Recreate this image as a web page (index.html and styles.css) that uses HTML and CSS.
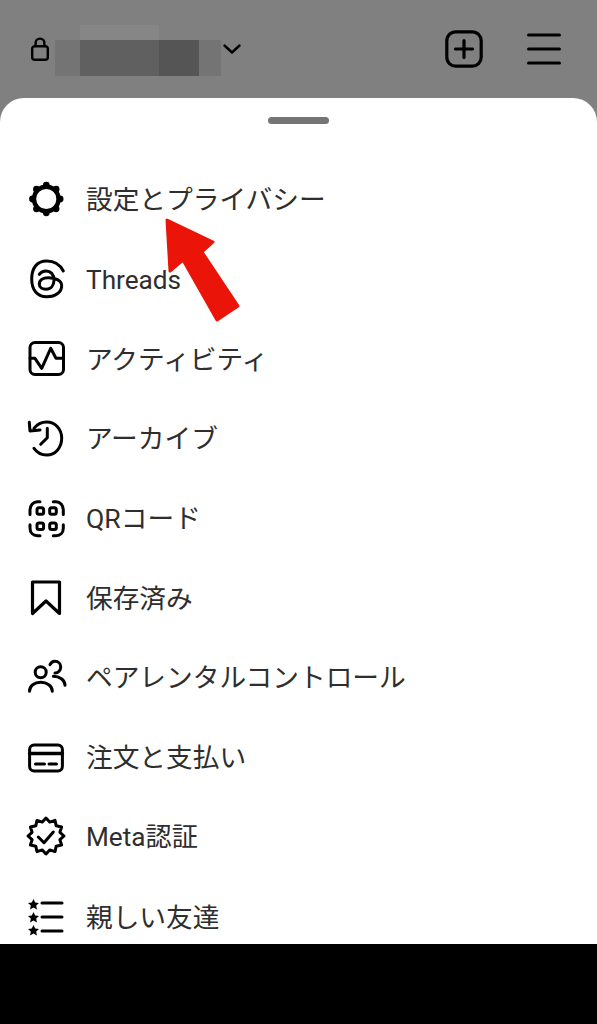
FILE: index.html
```html
<!DOCTYPE html>
<html lang="ja">
<head>
  <meta charset="UTF-8">
  <meta name="viewport" content="width=device-width, initial-scale=1.0">
  <title>メニュー</title>
  <link rel="stylesheet" href="styles.css">
</head>
<body>
  <div class="screen">
    <header class="topbar">
      <div class="account">
        <svg class="lock" viewBox="0 0 18 24" fill="none" stroke="#000" stroke-width="2.4">
          <rect x="1.2" y="9.2" width="15.6" height="13.6" rx="2.6"/>
          <path d="M4.6 9V6a4.400 4.400 0 0 1 8.800 0v3"/>
        </svg>
        <div class="mosaic">
          <span class="m1"></span><span class="m2"></span><span class="m3"></span><span class="m4"></span>
        </div>
        <svg class="chevron" viewBox="0 0 18 10" fill="none" stroke="#000" stroke-width="2.4" stroke-linecap="round" stroke-linejoin="round">
          <path d="M1.500 1.500 9 8.500l7.500-7"/>
        </svg>
      </div>
      <div class="actions">
        <svg class="plus" viewBox="0 0 38 38" fill="none" stroke="#000" stroke-width="3.2" stroke-linecap="round">
          <rect x="1.800" y="1.800" width="34.400" height="34.400" rx="9"/>
          <path d="M19 10.500v17M10.500 19h17"/>
        </svg>
        <svg class="burger" viewBox="0 0 34 32" fill="none" stroke="#000" stroke-width="3.2" stroke-linecap="round">
          <path d="M1.600 2h30.800M1.600 16h30.800M1.600 30h30.800"/>
        </svg>
      </div>
    </header>

    <main class="sheet">
      <div class="handle"></div>
      <ul class="menu">
        <li class="item">
          <svg class="ico" viewBox="0 0 36 36" fill="none" stroke="#000" stroke-width="4.400">
            <circle cx="18.300" cy="17" r="12.300"/>
            <g fill="#000" stroke="none">
              <circle cx="18.300" cy="3.200" r="3.400"/><circle cx="18.300" cy="30.800" r="3.400"/>
              <circle cx="4.500" cy="17" r="3.400"/><circle cx="32.100" cy="17" r="3.400"/>
              <circle cx="8.500" cy="7.200" r="3.400"/><circle cx="28.100" cy="7.200" r="3.400"/>
              <circle cx="8.500" cy="26.800" r="3.400"/><circle cx="28.100" cy="26.800" r="3.400"/>
            </g>
          </svg>
          <span class="label">設定とプライバシー</span>
        </li>
        <li class="item">
          <svg class="ico" viewBox="0 0 36 36" fill="none" stroke="#000" stroke-width="3" stroke-linecap="round">
            <path d="M35.300 9C31.300 1.300 25.300-1 18.700-1 8.700-1 3.700 6.300 3.700 17c0 11 5.600 17.700 15 17.700 9.300 0 15-5 15-11 0-5.700-6.700-8-13.400-8-5.600 0-9 2.600-9 6.600 0 3.400 3.400 5 6.700 5 4.700 0 8-3.600 8-9.300 0-5.700-3.300-9-8-9-2.700 0-5.300 1.300-6.700 3.300"/>
          </svg>
          <span class="label threads">Threads</span>
        </li>
        <li class="item">
          <svg class="ico" viewBox="0 0 36 36" fill="none" stroke="#000" stroke-width="3" stroke-linejoin="round" stroke-linecap="round">
            <rect x="2" y="1.500" width="33.500" height="32" rx="5"/>
            <path d="M2 17.300h5l6.700 10 9-20 5.300 10h7.300"/>
          </svg>
          <span class="label">アクティビティ</span>
        </li>
        <li class="item">
          <svg class="ico" viewBox="0 0 36 36" fill="none" stroke="#000" stroke-width="3" stroke-linecap="round" stroke-linejoin="round">
            <path d="M6 7.300C9 3.300 13.500 1 18.700 1 27.300 1 33.700 8 33.700 17.300S27.300 34 18.700 34c-5.200 0-9.700-2.500-12.700-6.700"/>
            <path d="M1.300 1.300 2 10l10-1"/>
            <path d="M19.300 7.300v9.400l-6.600 6.600"/>
          </svg>
          <span class="label">アーカイブ</span>
        </li>
        <li class="item">
          <svg class="ico" viewBox="0 0 36 36" fill="none" stroke="#000" stroke-width="3" stroke-linecap="round">
            <path d="M12 .8H9.500C5 .8 2 4.500 2 9v4.500M25.300 .8h2.700c4.500 0 7.300 3.700 7.300 8.200v4.500M2 23.700V27c0 4.500 3 7.700 7.500 7.700H12M35.300 23.700V27c0 4.500-2.800 7.700-7.300 7.700h-2.700"/>
            <rect x="9" y="6.700" width="6.600" height="6.600" rx="2"/>
            <rect x="21.700" y="6.700" width="6.600" height="6.600" rx="2"/>
            <rect x="9" y="21.900" width="6.600" height="6.600" rx="2"/>
            <rect x="21.700" y="21.900" width="6.600" height="6.600" rx="2"/>
          </svg>
          <span class="label">QRコード</span>
        </li>
        <li class="item">
          <svg class="ico" viewBox="0 0 36 36" fill="none" stroke="#000" stroke-width="3.200" stroke-linejoin="round">
            <path d="M4.500 2h27v31.500L18 21 4.500 33.500z"/>
          </svg>
          <span class="label">保存済み</span>
        </li>
        <li class="item">
          <svg class="ico" viewBox="0 0 36 36" fill="none" stroke="#000" stroke-width="3" stroke-linecap="round">
            <circle cx="12.700" cy="12.300" r="5.500"/>
            <path d="M1.500 31.300c0-5.500 5-9 11.200-9s11.600 3.500 11.600 9"/>
            <path d="M22 4.700c1-2.200 3-3.400 5-3.400 3.300 0 5.700 2.500 5.700 5.700S30.300 13 27 13"/>
            <path d="M25.300 16.300c6 0 11.700 3.500 11.700 9"/>
          </svg>
          <span class="label">ペアレンタルコントロール</span>
        </li>
        <li class="item">
          <svg class="ico" viewBox="0 0 36 36" fill="none" stroke="#000" stroke-width="3" stroke-linecap="round">
            <rect x="1.600" y="5" width="32.800" height="26" rx="4.500"/>
            <path d="M1.600 13.500h32.800" stroke-width="3.400"/>
            <path d="M7.500 24h9M21 24h7.500"/>
          </svg>
          <span class="label">注文と支払い</span>
        </li>
        <li class="item">
          <svg class="ico" viewBox="0 0 36 36" fill="none" stroke="#000" stroke-width="3" stroke-linejoin="round" stroke-linecap="round">
            <path d="M18-1l3.700 4.100L27 1.400l1.200 5.400 5.400 1.200-1.700 5.300L36 17l-4.100 3.700 1.700 5.300-5.400 1.200L27 32.600l-5.300-1.700L18 35l-3.700-4.100L9 32.600l-1.200-5.400L2.400 26l1.700-5.300L0 17l4.100-3.700L2.400 8l5.400-1.200L9 1.400l5.300 1.700z"/>
            <path d="M10.300 18l5.700 5.700L25.300 13"/>
          </svg>
          <span class="label meta">Meta認証</span>
        </li>
        <li class="item">
          <svg class="ico" viewBox="0 0 36 36" fill="none" stroke="#000" stroke-width="3" stroke-linecap="round">
            <path d="M14 4h20M14 18h20M14 32h20"/>
            <g fill="#000" stroke="none">
              <path d="M5.500 0l1.700 3.500 3.800.5-2.800 2.600.7 3.800-3.400-1.900-3.400 1.900.7-3.800L0 4l3.800-.5z"/>
              <path d="M5.500 13l1.700 3.500 3.800.5-2.800 2.600.7 3.800-3.400-1.900-3.400 1.900.7-3.800L0 17l3.800-.5z"/>
              <path d="M5.500 26l1.700 3.500 3.800.5-2.800 2.600.7 3.800-3.400-1.900-3.400 1.900.7-3.800L0 30l3.800-.5z"/>
            </g>
          </svg>
          <span class="label">親しい友達</span>
        </li>
      </ul>
      <svg class="arrow" viewBox="0 0 80 110" fill="#ea1408" stroke="#ea1408" stroke-width="3" stroke-linejoin="round">
        <path d="M2 2 48 24 37 34 73 88 52 102 18 42 5 53z"/>
      </svg>
    </main>
    <div class="navbar"></div>
  </div>
</body>
</html>
```

FILE: styles.css
```css
* {
  box-sizing: border-box;
}
body {
  margin: 0;
  background: #000;
  font-family: Roboto, "Noto Sans CJK JP", sans-serif;
}
.screen {
  display: flex;
  flex-direction: column;
  height: 1024px;
  overflow: hidden;
  background: #808080;
}
.topbar {
  display: flex;
  align-items: center;
  justify-content: space-between;
  height: 98px;
  flex: none;
  padding: 0 36px 0 31px;
}
.account {
  display: flex;
  align-items: center;
}
.lock {
  width: 18px;
  height: 24px;
}
.mosaic {
  display: flex;
  height: 36px;
  margin: 18px 2px 0 6px;
}
.mosaic span {
  display: block;
  position: relative;
}
.m1 {
  width: 25px;
  background: #747474;
}
.m2 {
  width: 79px;
  background: #606060;
}
.m2::before {
  content: "";
  position: absolute;
  left: 0;
  right: 0;
  top: -15px;
  height: 15px;
  background: #868686;
}
.m3 {
  width: 40px;
  background: #555;
}
.m4 {
  width: 22px;
  background: #747474;
}
.chevron {
  width: 18px;
  height: 10px;
}
.actions {
  display: flex;
  align-items: center;
  gap: 44px;
}
.plus {
  width: 38px;
  height: 38px;
}
.burger {
  width: 34px;
  height: 32px;
}
.sheet {
  position: relative;
  height: 846px;
  flex: none;
  padding-top: 19px;
  background: #fff;
  border-radius: 24px 24px 0 0;
}
.handle {
  width: 61px;
  height: 7px;
  margin: 0 auto 36px;
  border-radius: 4px;
  background: #757575;
}
.menu {
  margin: 0;
  padding: 0;
  list-style: none;
}
.item {
  display: flex;
  align-items: center;
  gap: 22px;
  height: 79.7px;
  padding-left: 28px;
  font-size: 26.7px;
  color: #2e2e2e;
}
.label {
  padding-bottom: 4px;
}
.label.threads {
  padding-bottom: 0;
  font-size: 26.2px;
}
.label.meta {
  font-size: 26.2px;
}
.ico {
  width: 36px;
  height: 36px;
  flex: none;
  overflow: visible;
}
.arrow {
  position: absolute;
  left: 165px;
  top: 120px;
  width: 80px;
  height: 110px;
}
.navbar {
  flex: 1;
  background: #000;
}
```
